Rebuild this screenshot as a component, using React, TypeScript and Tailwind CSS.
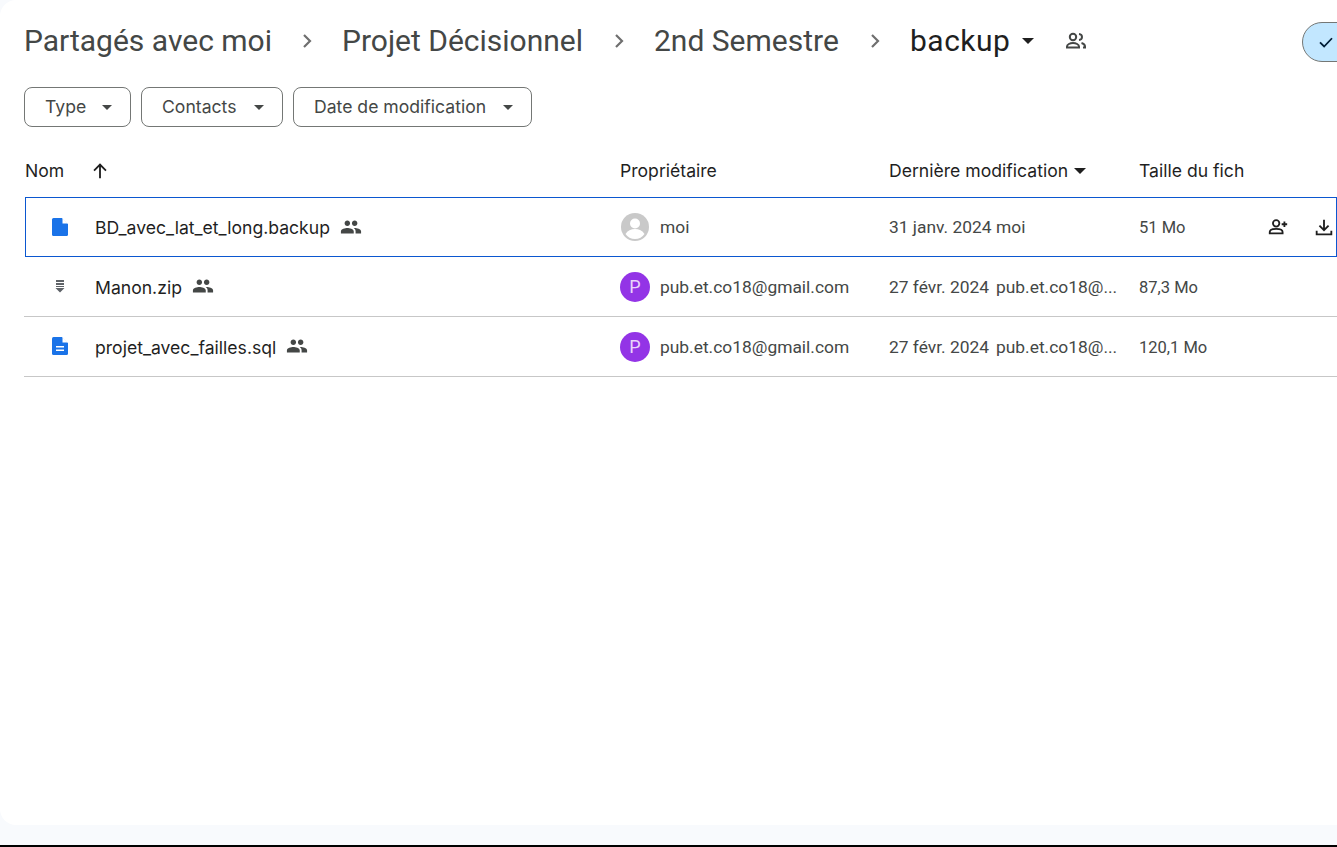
const FONT = "font-['Roboto','Liberation_Sans',sans-serif]";
const LABEL = "font-['Inter','Liberation_Sans',sans-serif] text-[17.6px]";

const PEOPLE =
	"M16 11c1.66 0 2.99-1.34 2.99-3S17.66 5 16 5s-3 1.34-3 3 1.34 3 3 3zm-8 0c1.66 0 2.99-1.34 2.99-3S9.66 5 8 5 5 6.34 5 8s1.34 3 3 3zm0 2c-2.33 0-7 1.17-7 3.5V19h14v-2.5C15 14.17 10.33 13 8 13zm8 0c-.29 0-.62.02-.97.05 1.16.84 1.97 1.97 1.97 3.45V19h6v-2.5c0-2.33-4.67-3.5-7-3.5z";

function SharedIcon() {
	return (
		<svg viewBox="0 0 24 24" className="w-[22px] h-[22px] fill-[#444746] shrink-0">
			<path d={PEOPLE} />
		</svg>
	);
}

function Caret({ className }: { className: string }) {
	return (
		<svg viewBox="0 0 10 5" className={className}>
			<path d="M0 0l5 5 5-5z" />
		</svg>
	);
}

function Chevron() {
	return (
		<svg viewBox="0 0 24 24" className="w-6 h-6 fill-none stroke-[#6f6f6f] stroke-[2.2] shrink-0">
			<path d="M9 6l6 6-6 6" />
		</svg>
	);
}

function Crumb({ label, width }: { label: string; width: string }) {
	return (
		<span className={`${width} text-[#444746] text-[30px] leading-none shrink-0 whitespace-nowrap`}>{label}</span>
	);
}

function Filter({ label, width }: { label: string; width: string }) {
	return (
		<button
			type="button"
			className={`${width} ${LABEL} h-10 border border-[#747775] rounded-lg flex items-center justify-between pl-5 pr-[18px] text-[#444746]`}
		>
			<span className="pt-[1px]">{label}</span>
			<Caret className="w-[10px] h-[5px] fill-[#444746]" />
		</button>
	);
}

function FileIcon({ kind }: { kind: "blank" | "zip" | "doc" }) {
	if (kind === "zip") {
		return (
			<svg viewBox="0 0 20 20" className="w-5 h-5 fill-[#5f6368]">
				<path d="M6 4h8v2H6zM6 7h8v2H6zM6 10h8v1H6zM5.500 12h9L10 16.500z" />
			</svg>
		);
	}
	return (
		<svg viewBox="0 0 20 20" className="w-5 h-5">
			<path
				className="fill-[#1a73e8]"
				d="M2 2.500A1.500 1.500 0 0 1 3.500 1H12l6 6v10.500a1.500 1.500 0 0 1-1.500 1.500h-13A1.500 1.500 0 0 1 2 17.500z"
			/>
			<path className="fill-white" d="M12.500 1l5.500 5.500h-5.500z" />
			{kind === "doc" && <path className="fill-white" d="M6 10h8v1.600H6zM6 13.500h8v1.600H6z" />}
		</svg>
	);
}

function Owner({ me, name }: { me: boolean; name: string }) {
	return (
		<div className="flex items-center gap-[10px] min-w-0">
			{me ? (
				<svg viewBox="0 0 30 30" className="w-[30px] h-[30px] shrink-0">
					<circle cx="15" cy="15" r="14" fill="#c9c9c9" />
					<circle cx="15" cy="11.500" r="5" fill="#fff" />
					<path d="M5.500 22c2-3.500 5.500-5 9.500-5s7.500 1.500 9.500 5c-2 3-5.500 5-9.500 5s-7.500-2-9.500-5z" fill="#fff" />
				</svg>
			) : (
				<div className="w-[30px] h-[30px] rounded-full bg-[#9334e6] text-[#e8d5fa] text-[18px] flex items-center justify-center shrink-0">
					P
				</div>
			)}
			<span className={`text-[#444746] ${me ? "" : "pt-[2px]"}`}>{name}</span>
		</div>
	);
}

const ROWS = [
	{ name: "BD_avec_lat_et_long.backup", kind: "blank", me: true, owner: "moi", date: "31 janv. 2024", by: "moi", size: "51 Mo" },
	{ name: "Manon.zip", kind: "zip", me: false, owner: "pub.et.co18@gmail.com", date: "27 févr. 2024", by: "pub.et.co18@...", size: "87,3 Mo" },
	{ name: "projet_avec_failles.sql", kind: "doc", me: false, owner: "pub.et.co18@gmail.com", date: "27 févr. 2024", by: "pub.et.co18@...", size: "120,1 Mo" },
] as const;

export default function App() {
	return (
		<div className={`${FONT} w-[1337px] h-[847px] overflow-hidden flex flex-col bg-[#f8fafd] text-[17.4px]`}>
			<div className="h-[825px] shrink-0 bg-white rounded-tl-2xl rounded-bl-2xl overflow-hidden pl-6">
				{/* Breadcrumb */}
				<div className="h-[42px] mt-5 flex items-center w-[1400px]">
					<Crumb label="Partagés avec moi" width="w-[248px]" />
					<div className="w-[70px] flex justify-center"><Chevron /></div>
					<Crumb label="Projet Décisionnel" width="w-[242px]" />
					<div className="w-[70px] flex justify-center"><Chevron /></div>
					<Crumb label="2nd Semestre" width="w-[186px]" />
					<div className="w-[70px] flex justify-center"><Chevron /></div>
					<span className="text-[#1f1f1f] text-[30px] tracking-[0.5px] leading-none w-[100px] shrink-0">backup</span>
					<Caret className="ml-[12px] w-[12px] h-[6px] fill-[#1f1f1f] shrink-0" />
					<svg viewBox="0 0 24 24" className="ml-[30px] w-[24px] h-[24px] fill-none stroke-[#444746] stroke-2 shrink-0">
						<circle cx="9" cy="8" r="3.200" />
						<path d="M3 18.500v-1c0-2 3-3.500 6-3.500s6 1.500 6 3.500v1zM15 5c2 .2 3 1.500 3 3s-1 2.800-3 3M17.500 14c2 .5 3.500 1.600 3.500 3.500v1h-2" />
					</svg>
					<div className="ml-[214px] mt-[2px] w-[100px] h-10 shrink-0 border border-[#747775] rounded-l-[20px] bg-[#c2e7ff] flex items-center pl-[14px]">
						<svg viewBox="0 0 24 24" className="w-[18px] h-[18px] fill-none stroke-[#001d35] stroke-[2.4]">
							<path d="M4 12.500l5.500 5.500L20 7" />
						</svg>
					</div>
				</div>

				{/* Filters */}
				<div className="mt-[25px] flex gap-[10px]">
					<Filter label="Type" width="w-[107px]" />
					<Filter label="Contacts" width="w-[142px]" />
					<Filter label="Date de modification" width="w-[239px]" />
				</div>

				{/* Table header */}
				<div className={`${LABEL} mt-[24px] w-[1313px] h-[40px] grid grid-cols-[596px_269px_250px_1fr] items-center text-[#1f1f1f]`}>
					<div className="flex items-center pl-[1px]">
						<span>Nom</span>
						<svg viewBox="0 0 24 24" className="ml-[25px] w-[22px] h-[22px] fill-none stroke-[#1f1f1f] stroke-2">
							<path d="M12 20V5M5.500 11.500L12 5l6.500 6.500" />
						</svg>
					</div>
					<span>Propriétaire</span>
					<div className="flex items-center">
						<span>Dernière modification</span>
						<Caret className="ml-[6px] w-[12px] h-[6px] fill-[#1f1f1f]" />
					</div>
					<span className="whitespace-nowrap">Taille du fich</span>
				</div>

				{/* Rows */}
				<div className="w-[1313px] mt-[6px]">
					{ROWS.map((row, i) => (
						<div
							key={row.name}
							className={`h-[60px] grid items-center ${
								i === 0
									? "ml-[1px] grid-cols-[594px_269px_250px_1fr] border border-[#0b57d0]"
									: "grid-cols-[596px_269px_250px_1fr] border-b border-[#c7c7c7]"
							}`}
						>
							<div className={`flex items-center ${i === 0 ? "pl-[24px]" : "pl-[26px]"}`}>
								<FileIcon kind={row.kind} />
								<span className={`${LABEL} ml-[25px] text-[#1f1f1f] ${i === 0 ? "pt-[2px]" : "pt-[4px]"}`}>{row.name}</span>
								<span className="ml-[10px]"><SharedIcon /></span>
							</div>
							<Owner me={row.me} name={row.owner} />
							<div className={`flex items-center text-[#444746] ${i === 0 ? "" : "pt-[2px]"}`}>
								<span className="w-[107px] shrink-0 whitespace-nowrap">{row.date}</span>
								<span className="w-[122px] whitespace-nowrap">{row.by}</span>
							</div>
							<div className="flex items-center text-[#444746]">
								<span className={`w-[128px] shrink-0 text-[16.500px] ${i === 0 ? "pt-[2px]" : "pt-[4px]"}`}>{row.size}</span>
								{i === 0 && (
									<>
										<svg viewBox="0 0 24 24" className="w-[22px] h-[22px] fill-none stroke-[#1f1f1f] stroke-2 shrink-0">
											<circle cx="10" cy="8" r="3.500" />
											<path d="M3 19v-1.500C3 15 6.500 14 10 14s7 1 7 3.500V19zM19 6v6M16 9h6" />
										</svg>
										<svg viewBox="0 0 24 24" className="ml-[24px] w-[22px] h-[22px] fill-none stroke-[#1f1f1f] stroke-2 shrink-0">
											<path d="M12 4v11M7 10.500l5 5 5-5M4 16v4h16v-4" />
										</svg>
									</>
								)}
							</div>
						</div>
					))}
				</div>
			</div>
			<div className="h-5 shrink-0" />
			<div className="h-[2px] shrink-0 bg-black" />
		</div>
	);
}
